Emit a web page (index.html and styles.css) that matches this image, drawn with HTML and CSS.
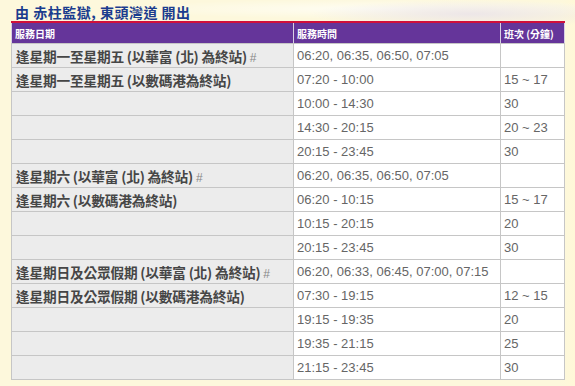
FILE: index.html
```html
<!DOCTYPE html>
<html lang="zh-Hant">
<head>
<meta charset="utf-8">
<link rel="stylesheet" href="styles.css">
</head>
<body>
<div class="page">
  <h1 class="title">由 赤柱監獄, 東頭灣道 開出</h1>
  <table class="timetable">
    <colgroup>
      <col class="c1"><col class="c2"><col class="c3">
    </colgroup>
    <thead>
      <tr><th>服務日期</th><th>服務時間</th><th>班次 (分鐘)</th></tr>
    </thead>
    <tbody>
      <tr><td class="day">逢星期一至星期五 (以華富 (北) 為終站) <span class="hash">#</span></td><td>06:20, 06:35, 06:50, 07:05</td><td></td></tr>
      <tr><td class="day">逢星期一至星期五 (以數碼港為終站)</td><td>07:20 - 10:00</td><td>15 ~ 17</td></tr>
      <tr><td class="day"></td><td>10:00 - 14:30</td><td>30</td></tr>
      <tr><td class="day"></td><td>14:30 - 20:15</td><td>20 ~ 23</td></tr>
      <tr><td class="day"></td><td>20:15 - 23:45</td><td>30</td></tr>
      <tr><td class="day">逢星期六 (以華富 (北) 為終站) <span class="hash">#</span></td><td>06:20, 06:35, 06:50, 07:05</td><td></td></tr>
      <tr><td class="day">逢星期六 (以數碼港為終站)</td><td>06:20 - 10:15</td><td>15 ~ 17</td></tr>
      <tr><td class="day"></td><td>10:15 - 20:15</td><td>20</td></tr>
      <tr><td class="day"></td><td>20:15 - 23:45</td><td>30</td></tr>
      <tr><td class="day">逢星期日及公眾假期 (以華富 (北) 為終站) <span class="hash">#</span></td><td>06:20, 06:33, 06:45, 07:00, 07:15</td><td></td></tr>
      <tr><td class="day">逢星期日及公眾假期 (以數碼港為終站)</td><td>07:30 - 19:15</td><td>12 ~ 15</td></tr>
      <tr><td class="day"></td><td>19:15 - 19:35</td><td>20</td></tr>
      <tr><td class="day"></td><td>19:35 - 21:15</td><td>25</td></tr>
      <tr><td class="day"></td><td>21:15 - 23:45</td><td>30</td></tr>
    </tbody>
  </table>
</div>
</body>
</html>
```

FILE: styles.css
```css
html, body {
  margin: 0;
  padding: 0;
}
body {
  width: 575px;
  height: 386px;
  overflow: hidden;
  background-color: #fdf8dc;
  background-image:
    radial-gradient(ellipse 160px 14px at 470px 14px, rgba(235,228,232,0.9), rgba(235,228,232,0) 100%),
    radial-gradient(ellipse 260px 10px at 380px 9px, rgba(255,255,250,0.8), rgba(255,255,250,0) 100%),
    linear-gradient(90deg, #fdf8dc 0, #fdf8dc 560px, #fff8d8 575px);
  font-family: "Liberation Sans", Arial, "Noto Sans CJK TC", sans-serif;
}
.page {
  padding: 5px 0 0 11px;
}
.title {
  margin: 0 0 2px 4px;
  height: 14px;
  line-height: 14px;
  font-size: 14px;
  font-weight: bold;
  color: #1b3c8e;
  font-family: "Noto Sans CJK TC", sans-serif;
  letter-spacing: 0.5px;
}
.timetable {
  border-collapse: collapse;
  width: 553px;
  table-layout: fixed;
  border: 1px solid #c6c6c6;
}
.c1 { width: 282px; }
.c2 { width: 207px; }
.c3 { width: 64px; }
.timetable th {
  height: 20px;
  padding: 0 3px;
  background: #65359a;
  color: #fff;
  font-family: "Noto Sans CJK TC", sans-serif;
  font-size: 10px;
  font-weight: bold;
  text-align: left;
  border-top: 2px solid #d0103a;
  border-left: 1px solid #d8d0e4;
  border-right: 1px solid #d8d0e4;
  border-bottom: 1px solid #c6c6c6;
}
.timetable td {
  height: 23px;
  padding: 0 3px;
  border: 1px solid #c6c6c6;
  background: #fff;
  color: #666;
  font-size: 13px;
  white-space: nowrap;
}
.timetable td.day {
  background: #ececec;
  color: #464646;
  font-family: "Noto Sans CJK TC", sans-serif;
  font-weight: bold;
  font-size: 13.7px;
  padding-left: 4px;
  letter-spacing: -0.2px;
}
.hash {
  font-family: "Liberation Sans", Arial, sans-serif;
  font-weight: normal;
  color: #888;
  font-size: 12px;
}
```
